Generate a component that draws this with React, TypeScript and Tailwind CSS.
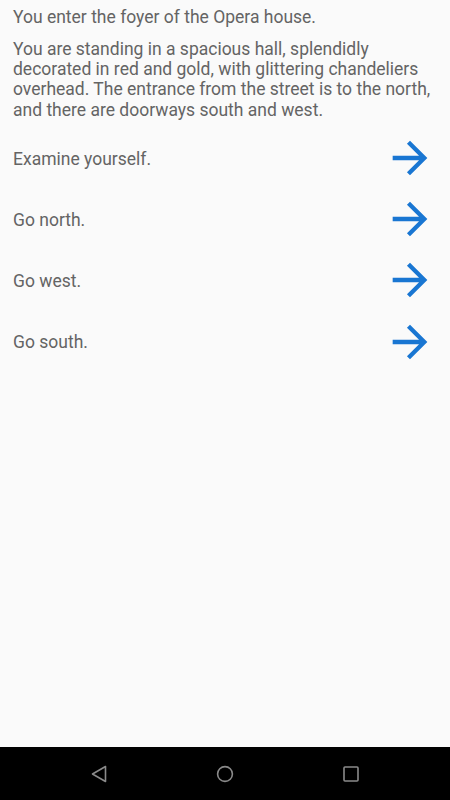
const choices = ['Examine yourself.', 'Go north.', 'Go west.', 'Go south.'];

const ArrowForward = () => (
  <svg width="52" height="52" viewBox="0 0 24 24" fill="#1976D2">
    <path d="M12 4l-1.41 1.41L16.17 11H4v2h12.17l-5.58 5.59L12 20l8-8z" />
  </svg>
);

export default function App() {
  return (
    <div className="h-[800px] w-[450px] flex flex-col bg-[#fafafa] font-['Roboto',sans-serif]">
      <main className="flex-1 pl-[13px] pr-[14px] pt-[6.5px] text-[17.5px] leading-[20.3px] text-[#646464]">
        <p>You enter the foyer of the Opera house.</p>
        <p className="mt-[12px]">
          You are standing in a spacious hall, splendidly decorated in red and gold, with glittering
          chandeliers overhead. The entrance from the street is to the north, and there are doorways
          south and west.
        </p>
        <ul className="mt-[7.5px]">
          {choices.map((c) => (
            <li key={c} className="h-[61.2px] flex items-center justify-between">
              <span className="pt-[2px]">{c}</span>
              <ArrowForward />
            </li>
          ))}
        </ul>
      </main>
      <nav className="h-[53px] bg-black flex items-center justify-center">
        <div className="flex items-center gap-[109px] pt-[1px]">
          <svg width="16" height="18" viewBox="0 0 16 18" fill="none" stroke="#8a8a8a" strokeWidth="1.6" strokeLinejoin="round">
            <path d="M14.5 1.5v15L1.5 9z" />
          </svg>
          <svg width="18" height="18" viewBox="0 0 18 18" fill="none" stroke="#8a8a8a" strokeWidth="1.6">
            <circle cx="9" cy="9" r="7.4" />
          </svg>
          <svg width="16" height="16" viewBox="0 0 16 16" fill="none" stroke="#8a8a8a" strokeWidth="1.6">
            <rect x="1" y="1" width="14" height="14" rx="1" />
          </svg>
        </div>
      </nav>
    </div>
  );
}
